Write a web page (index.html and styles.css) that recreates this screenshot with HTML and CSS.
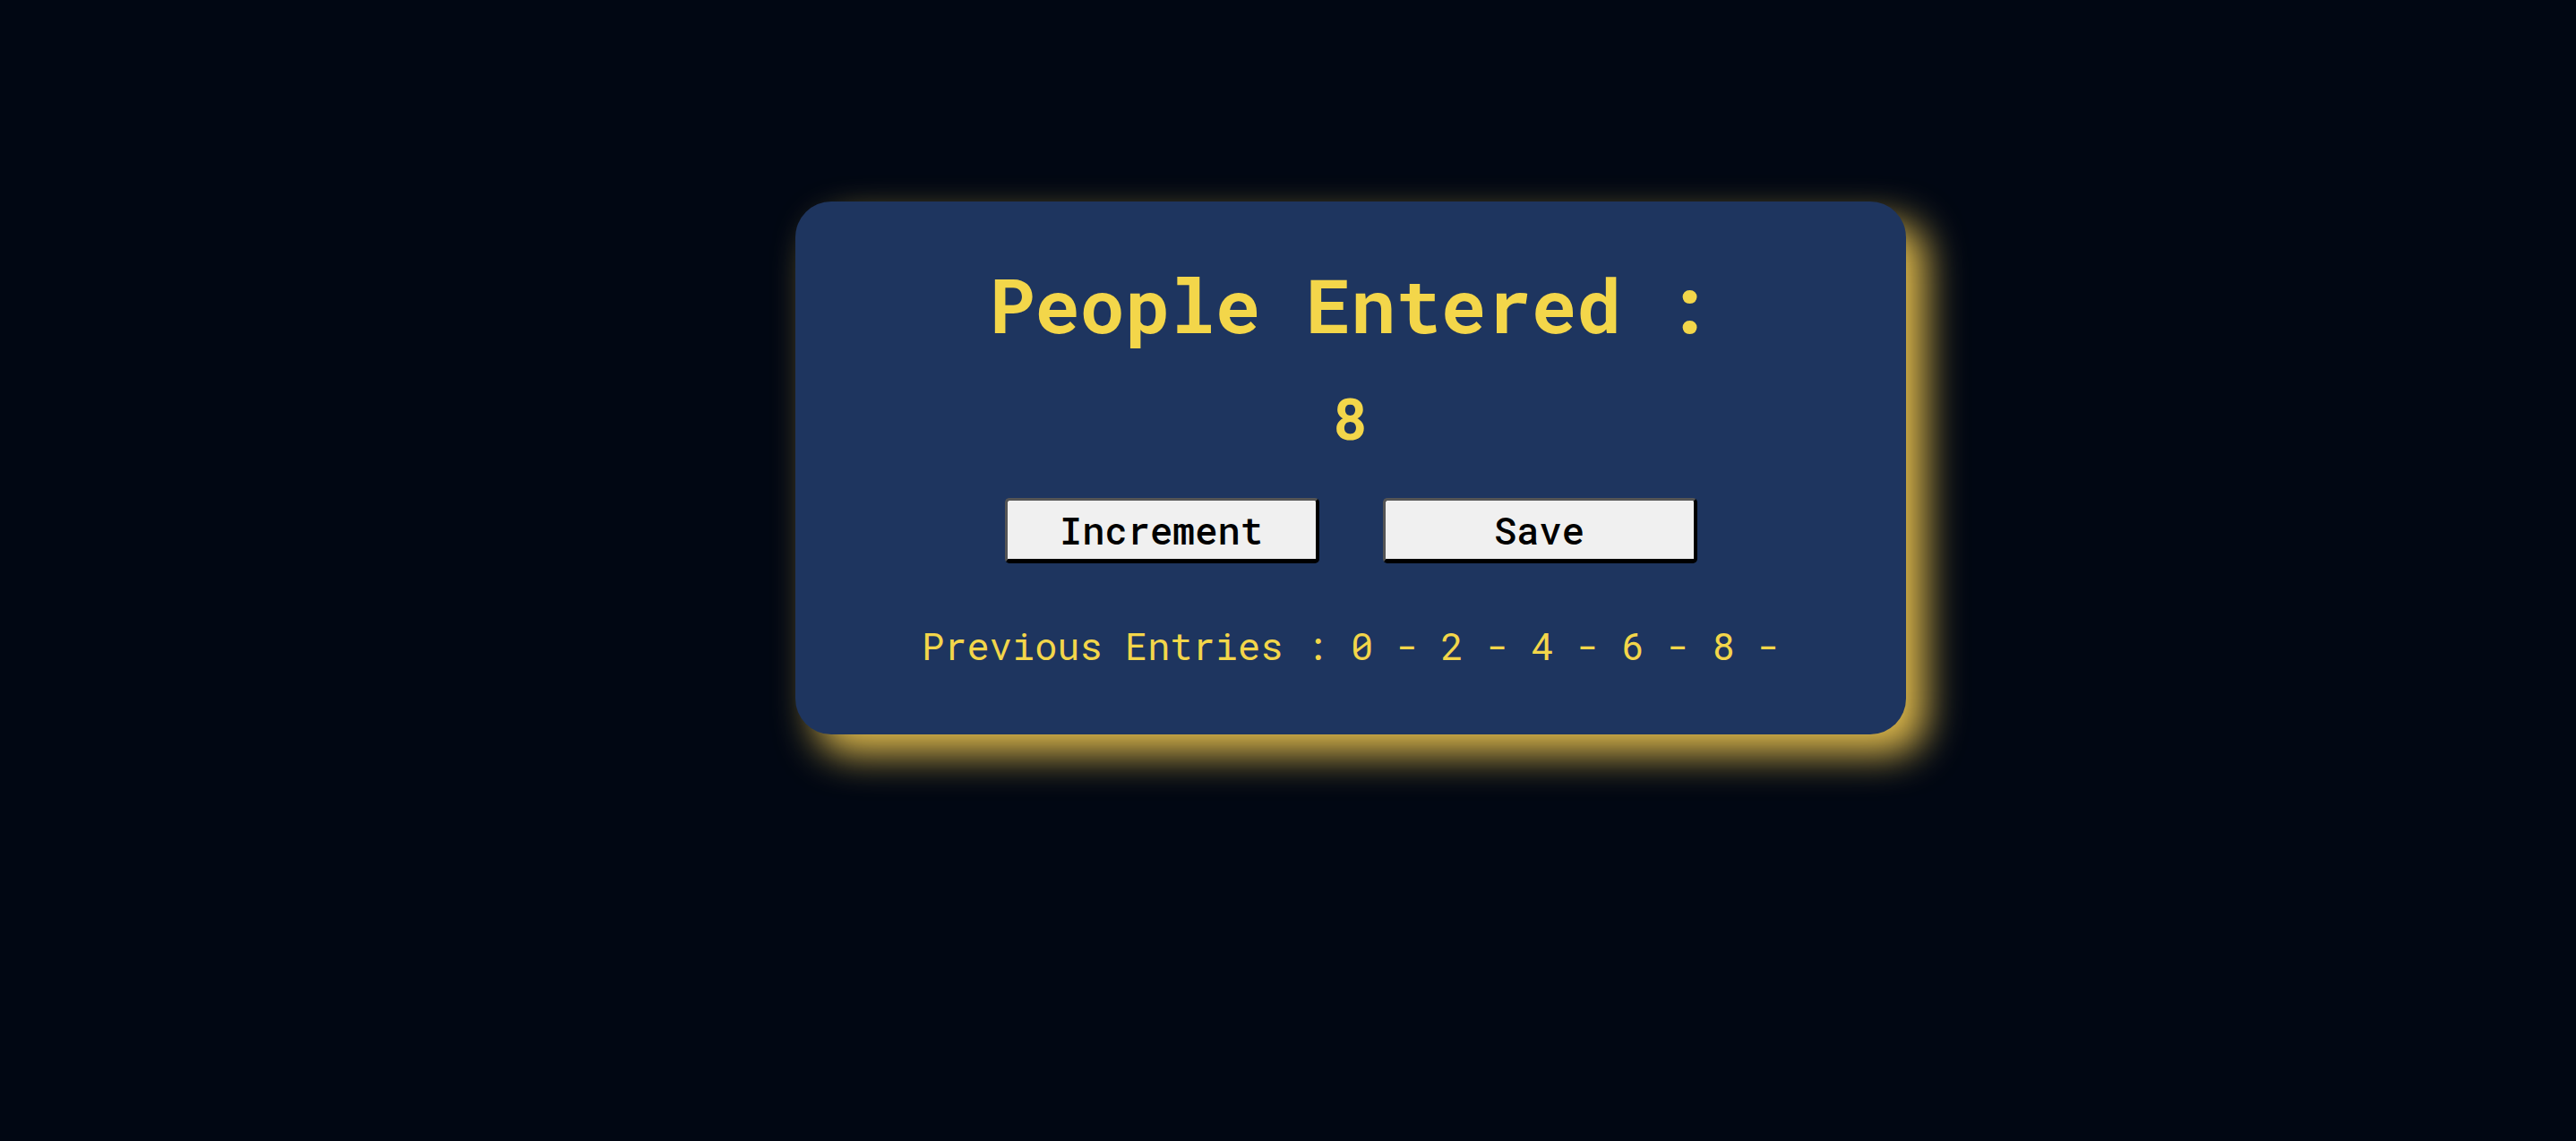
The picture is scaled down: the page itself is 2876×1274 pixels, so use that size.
FILE: index.html
```html
<!DOCTYPE html>
<html lang="en">
<head>
<meta charset="utf-8">
<title>People Counter</title>
<link rel="stylesheet" href="styles.css">
</head>
<body>
  <main class="card">
    <h1 class="title">People Entered :</h1>
    <h2 class="count">8</h2>
    <div class="actions">
      <button class="btn">Increment</button>
      <button class="btn">Save</button>
    </div>
    <p class="entries">Previous Entries : 0 - 2 - 4 - 6 - 8 -</p>
  </main>
</body>
</html>
```

FILE: styles.css
```css
html, body {
  margin: 0;
  padding: 0;
  background: #010713;
  height: 100%;
}

body {
  font-family: "Roboto Mono", "DejaVu Sans Mono", "Liberation Mono", monospace;
  color: #f3d64a;
}

.card {
  box-sizing: border-box;
  width: 1240px;
  height: 595px;
  margin: 225px 0 0 888px;
  background: #1e355f;
  border-radius: 40px;
  box-shadow: 22px 22px 44px #e0bb4c;
  display: flex;
  flex-direction: column;
  align-items: center;
  padding-top: 60px;
}

.title {
  margin: 0;
  font-size: 84px;
  line-height: 110px;
  font-weight: 700;
}

.count {
  margin: 31px 0 0;
  font-size: 64px;
  line-height: 80px;
  font-weight: 700;
}

.actions {
  display: flex;
  gap: 71px;
  margin-top: 50px;
}

.btn {
  box-sizing: border-box;
  width: 351px;
  height: 73px;
  background: #f0f0f0;
  color: #000;
  font-family: inherit;
  font-size: 42px;
  font-weight: 500;
  border-style: solid;
  border-width: 3px 4px 5px 3px;
  border-color: #555 #000 #000 #555;
  border-radius: 5px;
  padding: 0;
}

.entries {
  margin: 67px 0 0;
  font-size: 42px;
  line-height: 50px;
  font-weight: 400;
  white-space: nowrap;
}
```
